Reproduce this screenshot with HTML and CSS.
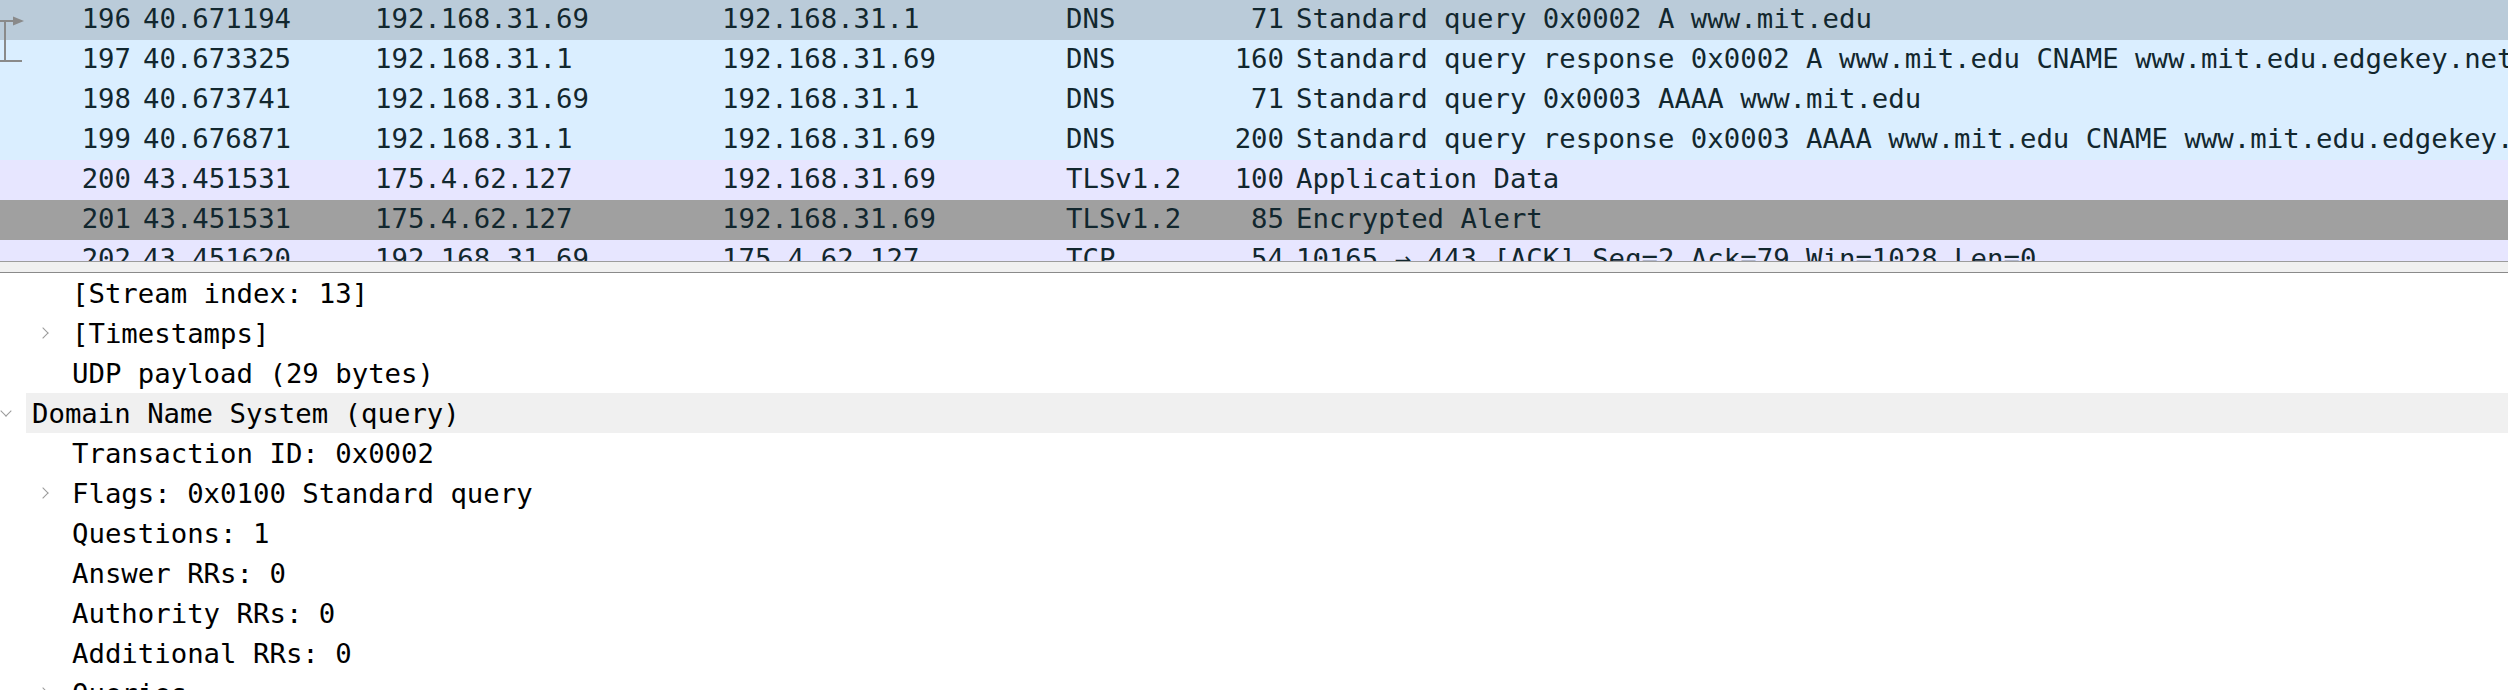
FILE: index.html
```html
<!DOCTYPE html>
<html lang="en">
<head>
<meta charset="utf-8">
<title>Wireshark</title>
<link rel="stylesheet" href="styles.css">
</head>
<body>
<div class="app">
  <div class="packet-list">
    <svg class="related" width="28" height="66" viewBox="0 0 28 66" aria-hidden="true">
      <line x1="0" y1="21" x2="14" y2="21" stroke="#8a8a8a" stroke-width="2"/>
      <polygon points="13,16.5 24,21 13,25.5" fill="#8a8a8a"/>
      <line x1="5" y1="21" x2="5" y2="62" stroke="#8a8a8a" stroke-width="2"/>
      <line x1="0" y1="61" x2="22" y2="61" stroke="#8a8a8a" stroke-width="2"/>
    </svg>
    <div class="row sel">
      <span class="c no">196</span><span class="c">40.671194</span><span class="c">192.168.31.69</span><span class="c">192.168.31.1</span><span class="c">DNS</span><span class="c len">71</span><span class="c info">Standard query 0x0002 A www.mit.edu</span>
    </div>
    <div class="row udp">
      <span class="c no">197</span><span class="c">40.673325</span><span class="c">192.168.31.1</span><span class="c">192.168.31.69</span><span class="c">DNS</span><span class="c len">160</span><span class="c info">Standard query response 0x0002 A www.mit.edu CNAME www.mit.edu.edgekey.net A 23.196.225.164</span>
    </div>
    <div class="row udp">
      <span class="c no">198</span><span class="c">40.673741</span><span class="c">192.168.31.69</span><span class="c">192.168.31.1</span><span class="c">DNS</span><span class="c len">71</span><span class="c info">Standard query 0x0003 AAAA www.mit.edu</span>
    </div>
    <div class="row udp">
      <span class="c no">199</span><span class="c">40.676871</span><span class="c">192.168.31.1</span><span class="c">192.168.31.69</span><span class="c">DNS</span><span class="c len">200</span><span class="c info">Standard query response 0x0003 AAAA www.mit.edu CNAME www.mit.edu.edgekey.net CNAME e9566.dscb.akamaiedge.net</span>
    </div>
    <div class="row tcp">
      <span class="c no">200</span><span class="c">43.451531</span><span class="c">175.4.62.127</span><span class="c">192.168.31.69</span><span class="c">TLSv1.2</span><span class="c len">100</span><span class="c info">Application Data</span>
    </div>
    <div class="row alert">
      <span class="c no">201</span><span class="c">43.451531</span><span class="c">175.4.62.127</span><span class="c">192.168.31.69</span><span class="c">TLSv1.2</span><span class="c len">85</span><span class="c info">Encrypted Alert</span>
    </div>
    <div class="row tcp">
      <span class="c no">202</span><span class="c">43.451620</span><span class="c">192.168.31.69</span><span class="c">175.4.62.127</span><span class="c">TCP</span><span class="c len">54</span><span class="c info">10165 → 443 [ACK] Seq=2 Ack=79 Win=1028 Len=0</span>
    </div>
  </div>
  <div class="splitter"></div>
  <div class="details">
    <div class="node lvl1"><span class="twisty"></span><span class="label">[Stream index: 13]</span></div>
    <div class="node lvl1"><span class="twisty closed"></span><span class="label">[Timestamps]</span></div>
    <div class="node lvl1"><span class="twisty"></span><span class="label">UDP payload (29 bytes)</span></div>
    <div class="node lvl0 current"><span class="twisty open"></span><span class="label">Domain Name System (query)</span></div>
    <div class="node lvl1"><span class="twisty"></span><span class="label">Transaction ID: 0x0002</span></div>
    <div class="node lvl1"><span class="twisty closed"></span><span class="label">Flags: 0x0100 Standard query</span></div>
    <div class="node lvl1"><span class="twisty"></span><span class="label">Questions: 1</span></div>
    <div class="node lvl1"><span class="twisty"></span><span class="label">Answer RRs: 0</span></div>
    <div class="node lvl1"><span class="twisty"></span><span class="label">Authority RRs: 0</span></div>
    <div class="node lvl1"><span class="twisty"></span><span class="label">Additional RRs: 0</span></div>
    <div class="node lvl1"><span class="twisty closed"></span><span class="label">Queries</span></div>
  </div>
</div>
</body>
</html>
```

FILE: styles.css
```css
html, body {
  margin: 0;
  padding: 0;
  background: #ffffff;
}

body {
  width: 2508px;
  height: 690px;
  overflow: hidden;
  font-family: "DejaVu Sans Mono", "Liberation Mono", monospace;
  font-size: 27.33px;
  color: #12272e;
}

.app {
  display: flex;
  flex-direction: column;
  height: 690px;
}

.packet-list {
  position: relative;
  height: 261px;
  overflow: hidden;
  flex: none;
  border-bottom: 1px solid #9c9c9c;
}

.related {
  position: absolute;
  left: 0;
  top: 0;
}

.row {
  display: grid;
  grid-template-columns: 137px 232px 347px 344px 120px 110px 1fr;
  height: 40px;
  line-height: 38px;
  white-space: nowrap;
}

.row.sel { background: #bacbd9; }
.row.udp { background: #daeeff; }
.row.tcp { background: #e7e6ff; }
.row.alert { background: #a0a0a0; }

.c {
  padding: 0 6px;
  overflow: visible;
}

.c.no, .c.len {
  text-align: right;
}

.c.info {
  overflow: hidden;
}

.splitter {
  flex: none;
  height: 10px;
  background: #f0f0f0;
  border-bottom: 1px solid #8a8a8a;
}

.details {
  flex: 1;
  overflow: hidden;
  color: #000000;
}

.node {
  display: flex;
  align-items: stretch;
  height: 40px;
  white-space: nowrap;
}

.node.lvl0 { padding-left: 0; }
.node.lvl1 { padding-left: 34px; }

.twisty {
  flex: none;
  width: 26px;
  height: 40px;
  position: relative;
}

.twisty.closed::before {
  content: "";
  position: absolute;
  left: 5px;
  top: 16px;
  width: 7px;
  height: 7px;
  border-right: 1.5px solid #9a9a9a;
  border-top: 1.5px solid #9a9a9a;
  transform: rotate(45deg);
}

.twisty.open::before {
  content: "";
  position: absolute;
  left: 2px;
  top: 14px;
  width: 7px;
  height: 7px;
  border-right: 1.5px solid #9a9a9a;
  border-bottom: 1.5px solid #9a9a9a;
  transform: rotate(45deg);
}

.label {
  box-sizing: border-box;
  height: 40px;
  line-height: 40px;
  padding-top: 1px;
  padding-left: 12px;
}

.node.lvl0 .label {
  padding-left: 6px;
}

.node.current .label {
  flex: 1;
  background: #f0f0f0;
}
```
